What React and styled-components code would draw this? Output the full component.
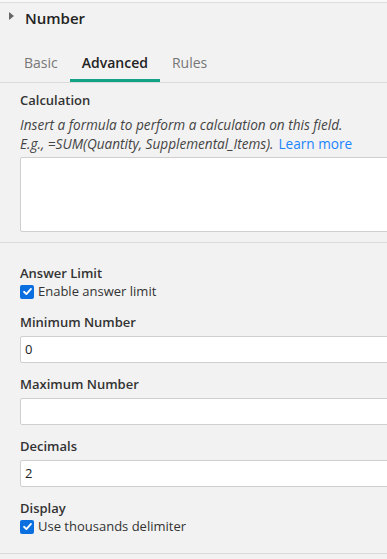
import React from "react";
import styled, { createGlobalStyle } from "styled-components";

const GlobalStyle = createGlobalStyle`
  html, body {
    margin: 0;
    padding: 0;
    background: #f9f9f9;
    overflow: hidden;
  }
  body {
    font-family: "Open Sans", "Noto Sans", sans-serif;
    color: #333;
  }
`;

const Panel = styled.div`
  width: 100%;
  margin-top: 2px;
  border-top: 1px solid #dcdcdc;
  background: #f2f2f2;
  height: 560px;
  box-sizing: border-box;
  overflow: hidden;
`;

const Header = styled.div`
  display: flex;
  align-items: center;
  gap: 11px;
  padding: 2px 0 0 9px;
  height: 28px;
`;

const Caret = styled.span`
  width: 0;
  height: 0;
  border-top: 4px solid transparent;
  border-bottom: 4px solid transparent;
  border-left: 5px solid #666;
  margin-top: -6px;
`;

const Title = styled.h2`
  margin: 0;
  font-size: 15px;
  font-weight: 600;
  color: #222;
  margin-top: -3px;
`;

const Tabs = styled.div`
  display: flex;
  margin-top: 20px;
  padding-left: 12px;
  border-bottom: 1px solid #dadada;
`;

const Tab = styled.div`
  padding: 0 12px 6px;
  font-size: 14px;
  color: ${(p) => (p.$active ? "#222" : "#777")};
  font-weight: ${(p) => (p.$active ? 600 : 400)};
  border-bottom: 3px solid ${(p) => (p.$active ? "#12a385" : "transparent")};
  line-height: 20px;
`;

const Section = styled.div`
  padding: ${(p) => p.$pad || "12px 0 10px 20px"};
  border-bottom: ${(p) => (p.$divider ? "1px solid #dadada" : "none")};
`;

const Label = styled.div`
  font-size: 13px;
  font-weight: 600;
  color: #333;
  line-height: 18px;
  margin-top: ${(p) => p.$gap || 0}px;
`;

const Help = styled.p`
  margin: 6px 0 0;
  font-size: 13.6px;
  font-style: italic;
  line-height: 19px;
  color: #444;
  white-space: nowrap;
`;

const LearnMore = styled.a`
  font-style: normal;
  color: #1a85ff;
  text-decoration: none;
  margin-left: 5px;
`;

const TextArea = styled.div`
  margin-top: 4px;
  height: 73px;
  width: calc(100% + 4px);
  background: #fff;
  border: 1px solid #cfcfcf;
  border-radius: 2px;
`;

const Input = styled.div`
  margin-top: 5px;
  height: 25px;
  width: calc(100% + 4px);
  background: #fff;
  border: 1px solid #cfcfcf;
  border-radius: 2px;
  font-size: 13px;
  line-height: 25px;
  padding-left: 4px;
  color: #222;
  box-sizing: border-box;
  height: 27px;
`;

const CheckRow = styled.label`
  display: flex;
  align-items: center;
  gap: 4px;
  font-size: 13px;
  color: #333;
  line-height: 19px;
`;

const Box = styled.span`
  width: 14px;
  height: 14px;
  border-radius: 2px;
  background: #0b6fe0;
  display: inline-flex;
  align-items: center;
  justify-content: center;
`;

function Check({ children }) {
  return (
    <CheckRow>
      <Box>
        <svg width="11" height="11" viewBox="0 0 12 12">
          <path d="M2.2 6.3 L4.8 8.8 L9.8 3.2" fill="none" stroke="#fff" strokeWidth="2" strokeLinecap="round" strokeLinejoin="round" />
        </svg>
      </Box>
      {children}
    </CheckRow>
  );
}

export default function App() {
  return (
    <>
      <GlobalStyle />
      <Panel>
        <Header>
          <Caret />
          <Title>Number</Title>
        </Header>
        <Tabs>
          <Tab>Basic</Tab>
          <Tab $active>Advanced</Tab>
          <Tab>Rules</Tab>
        </Tabs>
        <Section $divider $pad="8px 0 10px 20px">
          <Label>Calculation</Label>
          <Help>
            Insert a formula to perform a calculation on this field.
            <br />
            E.g., =SUM(Quantity, Supplemental_Items).
            <LearnMore href="#">Learn more</LearnMore>
          </Help>
          <TextArea />
        </Section>
        <Section $divider $pad="21px 0 17px 20px">
          <Label>Answer Limit</Label>
          <Check>Enable answer limit</Check>
          <Label $gap={12}>Minimum Number</Label>
          <Input>0</Input>
          <Label $gap={12}>Maximum Number</Label>
          <Input />
          <Label $gap={12}>Decimals</Label>
          <Input>2</Input>
          <Label $gap={12}>Display</Label>
          <Check>Use thousands delimiter</Check>
        </Section>
      </Panel>
    </>
  );
}
